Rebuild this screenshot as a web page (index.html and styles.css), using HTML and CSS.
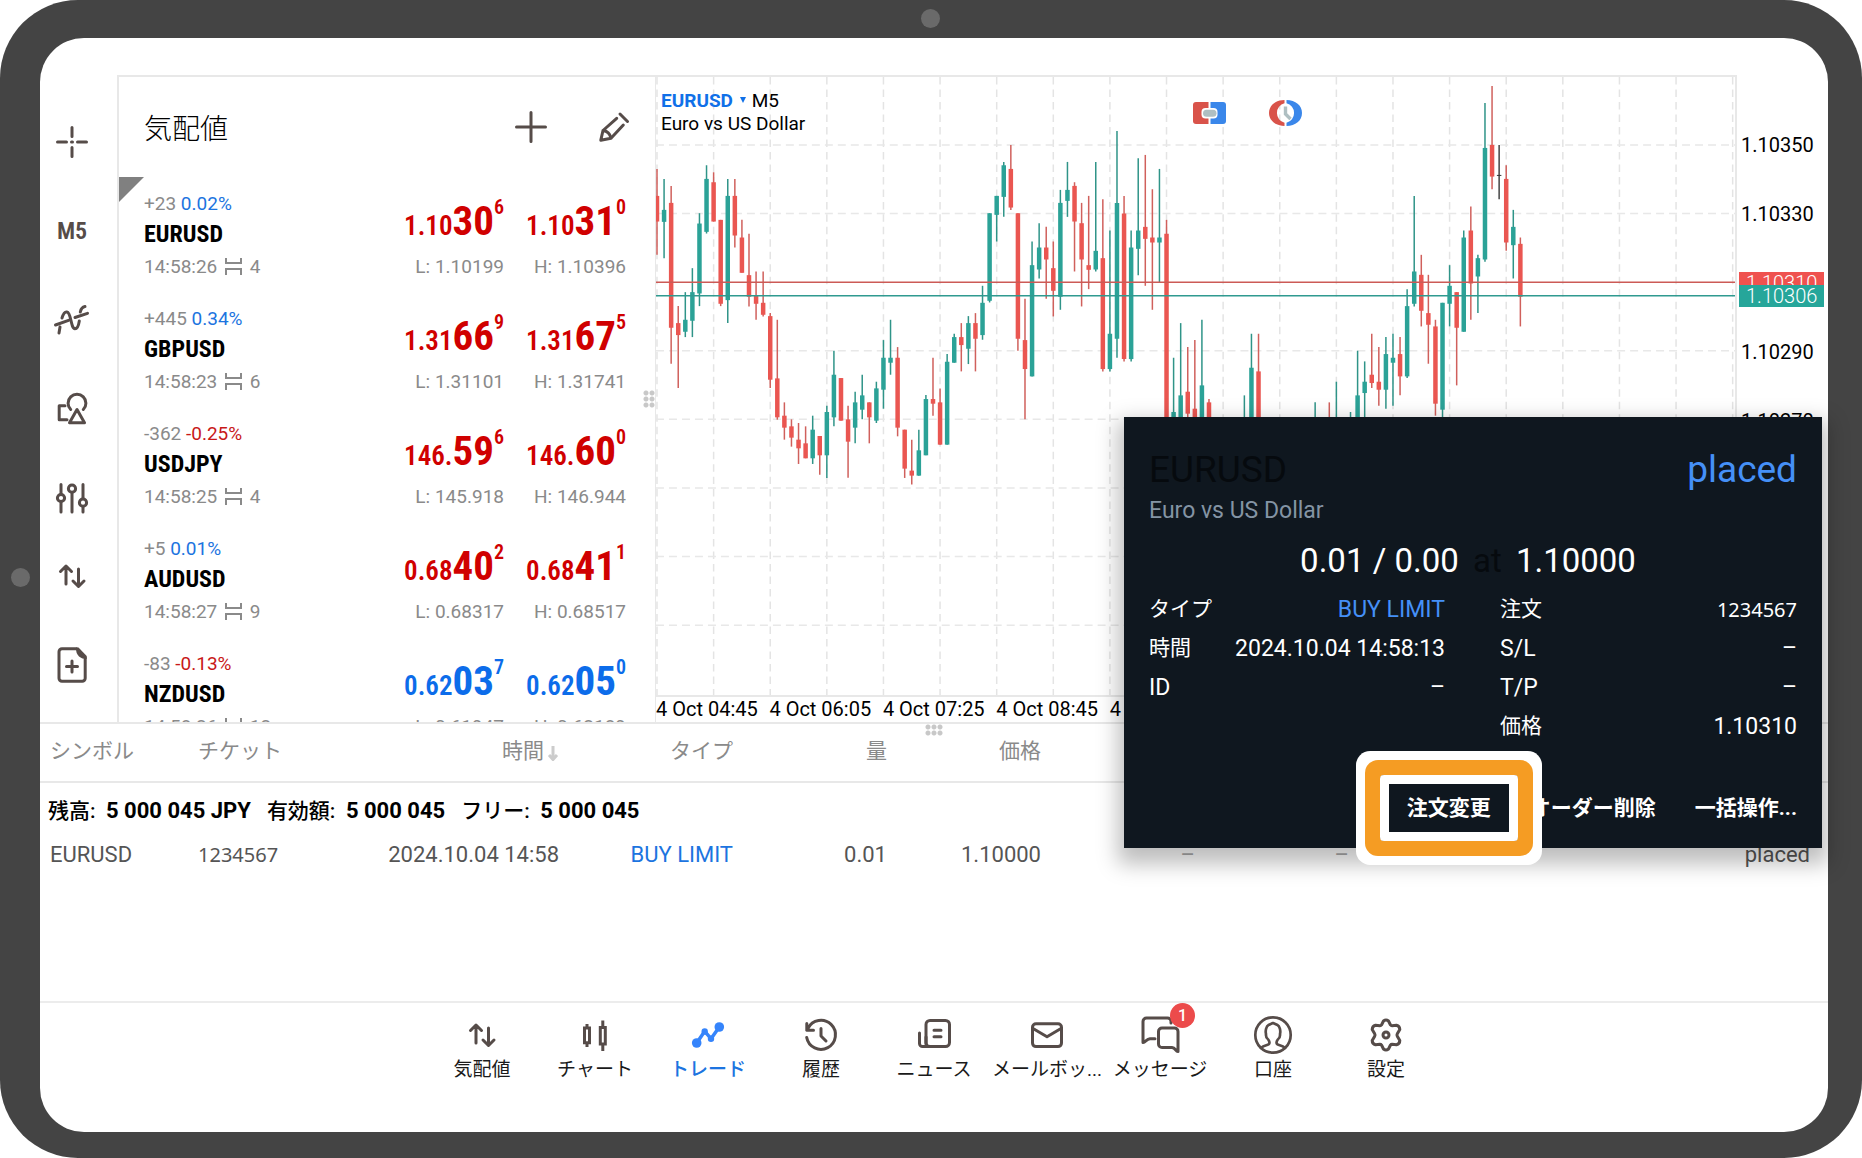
FILE: index.html
```html
<!DOCTYPE html>
<html lang="ja">
<head>
<meta charset="utf-8">
<meta name="viewport" content="width=device-width, initial-scale=1">
<title>トレード</title>
<link rel="stylesheet" href="styles.css">
</head>
<body>
<svg class="sprite" aria-hidden="true">
  <symbol id="i-arrows" viewBox="0 0 40 40"><path d="M14 28V10M8.500 15.500L14 10l5.500 5.500M26.500 13v17M21 25l5.500 5.500L32 25"/></symbol>
  <symbol id="i-spread" viewBox="0 0 17 17"><path d="M1 0v5h15V0M1 17v-6h15v6"/></symbol>
</svg>

<div class="tablet">
  <span class="lens lens--top"></span>
  <span class="lens lens--left"></span>

  <div class="screen">
    <div class="workspace">
      <div class="tools">
        <button class="tool" aria-label="十字カーソル"><svg class="icon" viewBox="0 0 40 40"><path d="M20 5.500v9M20 25.500v9M5.500 20h9M25.500 20h9M19.500 20h1"/></svg></button>
        <button class="tool tool--text">M5</button>
        <button class="tool" aria-label="インディケータ"><svg class="icon" viewBox="0 0 40 40"><path d="M3.500 25L16.500 20.300M23 17.500L35.500 13.300M7 33l1-6M10 18c1.500-5 3.200-6.500 5-6 4.500 1 3.500 16.500 8 16.700 2.500 0 3.600-3 4.300-7.700M28.300 12c.6-3 2.200-5 4.700-5.500"/></svg></button>
        <button class="tool" aria-label="オブジェクト"><svg class="icon" viewBox="0 0 40 40"><path d="M18.700 20.500a8.900 8.900 0 1 1 12.600 0M25 20.500L17.500 33.800h15zM13 16.800H7.200v14H15"/></svg></button>
        <button class="tool" aria-label="設定"><svg class="icon" viewBox="0 0 40 40"><path d="M9 6.500v9.500M9 24v10M20 14.500V34M31 6.500v14M31 28.500V34"/><circle cx="9" cy="20" r="3.600"/><circle cx="20" cy="10.700" r="3.600"/><circle cx="31" cy="24.700" r="3.600"/></svg></button>
        <button class="tool tool--short" aria-label="売買"><svg class="icon"><use href="#i-arrows"/></svg></button>
        <button class="tool tool--tall" aria-label="新規注文"><svg class="icon" viewBox="0 0 40 40"><path d="M24.500 3.800H10a3 3 0 0 0-3 3v26.400a3 3 0 0 0 3 3h20.200a3 3 0 0 0 3-3V12.500M20 16v11M14.500 21.500h11"/><path class="solid" d="M24 2.500h2.500l8.200 8.500v3c-6 0-11-3-10.700-11.500z"/></svg></button>
      </div>

      <section class="watch">
        <header class="watch-head">
          <h1>気配値</h1>
          <button aria-label="追加"><svg class="icon" viewBox="0 0 40 40"><path d="M20 5.500v29M5.500 20h29"/></svg></button>
          <button aria-label="編集"><svg class="icon" viewBox="0 0 40 40"><path d="M6.800 33.200L9 23.500 22.700 11.300M6.800 33.200l10.200-2L29.300 18M9 23.500c4.500.5 7 3 8 7.700M26 7l7.500 7.500"/></svg></button>
        </header>
        <ul class="quotes">
          <li class="quote quote--current">
            <p class="change">+23 <b class="up">0.02%</b></p>
            <p class="symbol">EURUSD</p>
            <p class="price down">1.10<b>30</b><sup>6</sup></p>
            <p class="price down">1.10<b>31</b><sup>0</sup></p>
            <p class="time">14:58:26 <svg><use href="#i-spread"/></svg> 4</p>
            <p class="range">L: 1.10199</p><p class="range">H: 1.10396</p>
          </li>
          <li class="quote">
            <p class="change">+445 <b class="up">0.34%</b></p>
            <p class="symbol">GBPUSD</p>
            <p class="price down">1.31<b>66</b><sup>9</sup></p>
            <p class="price down">1.31<b>67</b><sup>5</sup></p>
            <p class="time">14:58:23 <svg><use href="#i-spread"/></svg> 6</p>
            <p class="range">L: 1.31101</p><p class="range">H: 1.31741</p>
          </li>
          <li class="quote">
            <p class="change">-362 <b class="loss">-0.25%</b></p>
            <p class="symbol">USDJPY</p>
            <p class="price down">146.<b>59</b><sup>6</sup></p>
            <p class="price down">146.<b>60</b><sup>0</sup></p>
            <p class="time">14:58:25 <svg><use href="#i-spread"/></svg> 4</p>
            <p class="range">L: 145.918</p><p class="range">H: 146.944</p>
          </li>
          <li class="quote">
            <p class="change">+5 <b class="up">0.01%</b></p>
            <p class="symbol">AUDUSD</p>
            <p class="price down">0.68<b>40</b><sup>2</sup></p>
            <p class="price down">0.68<b>41</b><sup>1</sup></p>
            <p class="time">14:58:27 <svg><use href="#i-spread"/></svg> 9</p>
            <p class="range">L: 0.68317</p><p class="range">H: 0.68517</p>
          </li>
          <li class="quote">
            <p class="change">-83 <b class="loss">-0.13%</b></p>
            <p class="symbol">NZDUSD</p>
            <p class="price rise">0.62<b>03</b><sup>7</sup></p>
            <p class="price rise">0.62<b>05</b><sup>0</sup></p>
            <p class="time">14:58:26 <svg><use href="#i-spread"/></svg> 12</p>
            <p class="range">L: 0.61947</p><p class="range">H: 0.62189</p>
          </li>
        </ul>
        <span class="grip grip--side"></span>
      </section>

      <section class="chart">
        <div class="plot">
          <svg id="candles" class="candles" viewBox="0 0 1080 619" preserveAspectRatio="none" role="img" aria-label="EURUSD M5"></svg>
          <div class="caption">
            <p><button class="pair">EURUSD <i></i></button>M5</p>
            <p>Euro vs US Dollar</p>
          </div>
          <div class="quick">
            <button aria-label="ワンクリック取引"><svg width="33" height="26" viewBox="0 0 33 26"><path fill="#d9534a" d="M3 2h12.500v22H3a3 3 0 0 1-3-3V5a3 3 0 0 1 3-3z"/><path fill="#3a87ea" d="M17.500 2H30a3 3 0 0 1 3 3v16a3 3 0 0 1-3 3H17.500z"/><rect x="8.500" y="8" width="16" height="10.500" rx="4" fill="#fff"/><rect x="10" y="9.700" width="13.500" height="7" rx="3.500" fill="#afbfc2"/></svg></button>
            <button aria-label="注文時間"><svg width="33" height="26" viewBox="0 0 33 26"><path fill="#d9534a" d="M15.500 0v3.300a10 10 0 0 0 0 19.400V26C6.500 26 0 20.500 0 13S6.500 0 15.500 0z"/><path fill="#3a87ea" d="M17.500 0v3.300a10 10 0 0 1 0 19.400V26C26.500 26 33 20.500 33 13S26.500 0 17.500 0z"/><path d="M16.500 6.500v7.500l5 5" fill="none" stroke="#afbfc2" stroke-width="3.400"/></svg></button>
          </div>
        </div>
        <div class="prices">
          <span>1.10350</span>
          <span>1.10330</span>
          <span class="tags"><b class="tag tag--ask">1.10310</b><b class="tag tag--bid">1.10306</b></span>
          <span>1.10290</span>
          <span>1.10270</span>
        </div>
        <div class="times">
          <span>4 Oct 04:45</span><span>4 Oct 06:05</span><span>4 Oct 07:25</span><span>4 Oct 08:45</span><span>4 Oct 10:05</span>
        </div>
      </section>
    </div>

    <section class="trades">
      <span class="grip grip--top"></span>
      <table>
        <colgroup><col class="c-wide"><col class="c-wide"><col class="c-time"><col class="c-type"><col class="c-num"><col class="c-num"><col class="c-num"><col class="c-num"><col class="c-num"><col></colgroup>
        <thead>
          <tr><th>シンボル</th><th>チケット</th><th class="end sorted">時間<svg width="12" height="16" viewBox="0 0 12 16"><path d="M6 1v13M2 10l4 4.500 4-4.500"/></svg></th><th class="end">タイプ</th><th class="end">量</th><th class="end">価格</th><td colspan="4"></td></tr>
        </thead>
        <tbody>
          <tr class="balance"><td colspan="10"><span>残高:</span> <b>5 000 045 JPY</b><span>有効額:</span> <b>5 000 045</b><span>フリー:</span> <b>5 000 045</b></td></tr>
          <tr class="order"><td>EURUSD</td><td class="ticket">1234567</td><td class="end">2024.10.04 14:58</td><td class="end buy">BUY LIMIT</td><td class="end">0.01</td><td class="end">1.10000</td><td class="end none">–</td><td class="end none">–</td><td></td><td class="end">placed</td></tr>
        </tbody>
      </table>
    </section>

    <nav class="tabs">
      <a href="#quotes"><svg class="icon"><use href="#i-arrows"/></svg>気配値</a>
      <a href="#chart"><svg class="icon" viewBox="0 0 40 40"><path d="M9.500 13h5v14.800h-5zM12 9v3M12 29v3M25.300 12.500h5V29h-5zM27.800 5.500V11M27.800 30v6" stroke-linejoin="miter" stroke-linecap="butt"/></svg>チャート</a>
      <a href="#trade" class="active" aria-current="page"><svg class="icon" viewBox="0 0 40 40"><path stroke-width="3.500" d="M8.700 28l8-11.700 6.300 7.400L31.300 12"/><g class="solid"><circle cx="8.700" cy="28" r="4.800"/><circle cx="16.700" cy="16.500" r="3.200"/><circle cx="23" cy="23.700" r="3.200"/><circle cx="31.300" cy="12" r="4.800"/></g></svg>トレード</a>
      <a href="#history"><svg class="icon" viewBox="0 0 40 40"><path d="M5.700 22.500a14.500 14.500 0 1 0 1.300-9.200L5.800 15.200M5.800 8.500v6.700h6.700M20 13.500V21l5 5"/></svg>履歴</a>
      <a href="#news"><svg class="icon" viewBox="0 0 40 40"><rect x="12" y="5.500" width="23.500" height="26" rx="4"/><path d="M5.500 18v10.500a3 3 0 0 0 3 3h6M12 22v7M20 15.300h7M20 21.700h7"/></svg>ニュース</a>
      <a href="#mail"><svg class="icon" viewBox="0 0 40 40"><rect x="5.500" y="8.800" width="29" height="22.800" rx="3.500"/><path d="M6 13.500l14 8.300 14-8.300"/></svg>メールボッ...</a>
      <a href="#messages"><span class="badged"><svg class="icon" viewBox="0 0 40 40"><path d="M31 8V6.500A3.500 3.500 0 0 0 27.500 3H6.500A3.500 3.500 0 0 0 3 6.500v21c2.500-.3 3.500-3.500 7-3.800h5"/><path d="M22 13h12.500a3.500 3.500 0 0 1 3.500 3.500v20c-2.500-.2-2.500-3.700-6-4H22a3.500 3.500 0 0 1-3.500-3.500V16.500A3.500 3.500 0 0 1 22 13z"/></svg><b class="badge">1</b></span>メッセージ</a>
      <a href="#accounts"><svg class="icon" viewBox="0 0 40 40"><circle cx="20" cy="20" r="17.700" stroke-width="2.700"/><path stroke-width="2.700" d="M8 33c3-3 6.500-2.500 8-4 1-1.500.3-3-.8-4.500-1.500-1-2.500-3-2.200-5.500-.8-3 .2-8 2.500-9l4.500-2 4.500 2c2.300 1 3.300 6 2.500 9 .3 2.500-.7 4.500-2.200 5.500-1.100 1.500-1.800 3-.8 4.500 1.500 1.500 5 1 8 4"/></svg>口座</a>
      <a href="#settings"><svg class="icon" viewBox="0 0 40 40"><path d="M17.500 6q2.500-2 5 0l2 4q.5.700 1.500.7l4.500-.5q3.300.8 3.300 4.300l-2.500 4.300q-.7 1.200 0 2.400l2.500 4.300q0 3.500-3.300 4.300l-4.500-.5q-1 0-1.500.7l-2 4q-2.500 2-5 0l-2-4q-.5-.7-1.500-.7l-4.500.5q-3.300-.8-3.300-4.300l2.500-4.300q.7-1.200 0-2.400l-2.500-4.300q0-3.500 3.300-4.300l4.500.5q1 0 1.500-.7z"/><circle cx="20" cy="20" r="3"/></svg>設定</a>
    </nav>

    <aside class="popup">
      <header>
        <h2>EURUSD</h2><strong>placed</strong>
      </header>
      <p class="desc">Euro vs US Dollar</p>
      <p class="deal">0.01 / 0.00 <em>at</em> 1.10000</p>
      <div class="facts">
        <dl>
          <div><dt class="jp">タイプ</dt><dd class="buy">BUY LIMIT</dd></div>
          <div><dt class="jp">時間</dt><dd>2024.10.04 14:58:13</dd></div>
          <div><dt>ID</dt><dd>–</dd></div>
        </dl>
        <dl>
          <div><dt class="jp">注文</dt><dd class="ticket">1234567</dd></div>
          <div><dt>S/L</dt><dd>–</dd></div>
          <div><dt>T/P</dt><dd>–</dd></div>
          <div><dt class="jp">価格</dt><dd>1.10310</dd></div>
        </dl>
      </div>
      <div class="actions">
        <button class="marked">注文変更</button>
        <button>オーダー削除</button>
        <button>一括操作...</button>
      </div>
    </aside>
  </div>
</div>
<script src="chart.js"></script>
</body>
</html>
```
FILE: styles.css
```css
* { box-sizing: border-box; }

body, h1, h2, p, ul, dl, dd { margin: 0; }

body {
  background: #fff;
  color: #000;
  font-family: Roboto, "Noto Sans CJK JP", sans-serif;
  font-size: 22px;
}

button {
  padding: 0;
  border: 0;
  background: none;
  color: inherit;
  font: inherit;
}

ul { padding: 0; list-style: none; }

.sprite { position: absolute; width: 0; height: 0; }

.icon {
  display: block;
  width: 40px;
  height: 40px;
  fill: none;
  stroke: currentColor;
  stroke-width: 3;
  stroke-linecap: round;
  stroke-linejoin: round;
}

.solid { fill: currentColor; stroke: none; }

/* Device frame */
.tablet {
  position: relative;
  display: flex;
  min-height: 100vh;
  padding: 38px 34px 26px 40px;
  border-radius: 78px;
  background: #444;
}

.lens {
  position: absolute;
  width: 19px;
  height: 19px;
  border-radius: 50%;
  background: #6a6a6a;
}

.lens--top { top: 9px; left: calc(50% - 10px); }
.lens--left { left: 11px; top: calc(50% - 11px); }

.screen {
  position: relative;
  display: flex;
  flex: 1;
  flex-direction: column;
  min-width: 0;
  padding-top: 37px;
  border-radius: 44px;
  background: #fff;
}

.workspace {
  display: flex;
  height: 649px;
  border-bottom: 2px solid #e8e8e8;
}

/* Chart tools */
.tools {
  display: flex;
  flex-direction: column;
  width: 77px;
  padding: 22px 13px 0 0;
  color: #564c49;
}

.tool {
  display: flex;
  flex: none;
  align-items: center;
  justify-content: center;
  height: 89px;
}

.tool--short { height: 67px; }
.tool--tall { height: 111px; }

.tool--text, .symbol, .price {
  font-family: "Roboto Condensed", "Open Sans Condensed", "Noto Sans Condensed", Roboto, sans-serif;
  font-weight: 700;
}

.tool--text { font-size: 24px; font-weight: 600; }

/* Market watch */
.watch {
  position: relative;
  display: flex;
  flex-direction: column;
  width: 539px;
  border: 2px solid #e8e8e8;
  border-width: 2px 1px 0 2px;
}

.watch-head {
  display: flex;
  flex: none;
  align-items: center;
  gap: 43px;
  height: 100px;
  padding: 0 21px 1px 25px;
  color: #564c49;
}

.watch-head h1 {
  flex: 1;
  color: #000;
  font-size: 28px;
  font-weight: 300;
}

.quotes { flex: 1; overflow: hidden; }

.quote {
  position: relative;
  display: grid;
  grid-template-columns: 1fr 104px 122px;
  grid-template-rows: 26px 34px 32px;
  height: 115px;
  padding: 14px 29px 0 25px;
  color: #8a8a8a;
  font-size: 19px;
}

.quote--current::before {
  content: "";
  position: absolute;
  width: 25px;
  height: 25px;
  background: #808080;
  clip-path: polygon(0 0, 100% 0, 0 100%);
}

.change { grid-area: 1 / 1; line-height: 26px; }
.change b { font-weight: 400; }
.up { color: #1c74e0; }
.loss { color: #c81818; }

.symbol {
  grid-area: 2 / 1;
  color: #000;
  font-size: 24px;
  line-height: 34px;
}

.price {
  grid-row: 1 / 3;
  align-self: end;
  padding-bottom: 4px;
  font-size: 27px;
  font-weight: 600;
  line-height: 42px;
  text-align: right;
  white-space: nowrap;
}

.price b { font-size: 41px; font-weight: 700; }

.price sup {
  font-size: 20px;
  line-height: 0;
  vertical-align: 21px;
}

.down { color: #d00000; }
.rise { color: #0c6cea; }

.time { line-height: 32px; }

.time svg {
  width: 17px;
  height: 17px;
  margin: 0 3px;
  fill: none;
  stroke: currentColor;
  stroke-width: 2;
  vertical-align: -2px;
}

.range { line-height: 32px; text-align: right; white-space: nowrap; }

.grip {
  position: absolute;
  background: radial-gradient(circle, #c8c8c8 2px, transparent 3px) 0 0 / 6px 6px;
}

.grip--side { right: 0; top: 313px; width: 12px; height: 18px; }
.grip--top { left: calc(50% - 9px); top: 0; width: 18px; height: 12px; }

/* Chart */
.chart {
  display: grid;
  flex: 1;
  grid-template-columns: 1fr 91px;
  grid-template-rows: 1fr 29px;
  min-width: 0;
  font-size: 20px;
}

.plot {
  position: relative;
  min-width: 0;
  border: 2px solid #e8e8e8;
  border-left: 0;
}

.candles { display: block; width: 100%; height: 100%; }

.caption {
  position: absolute;
  top: 12px;
  left: 5px;
  font-size: 19px;
  line-height: 23px;
}

.pair { color: #1070e8; font-weight: 700; }

.pair i {
  display: inline-block;
  margin: 0 6px 4px 2px;
  border: 3px solid transparent;
  border-top: 6px solid #1070e8;
  border-bottom: 0;
}

.quick {
  position: absolute;
  top: 23px;
  left: 537px;
  display: flex;
  gap: 43px;
}

.quick svg { display: block; }

.prices {
  display: grid;
  align-content: start;
  grid-auto-rows: 69px;
  align-items: center;
  padding: 35px 0 0 4px;
}

.tags { position: relative; height: 24px; color: #fff; }

.tag {
  position: absolute;
  left: -2px;
  width: 85px;
  height: 22px;
  padding-left: 7px;
  background: #ef524f;
  font-weight: 300;
  line-height: 22px;
}

.tag--ask { top: 1px; }
.tag--bid { top: 14px; background: #26a69a; }

.times {
  display: grid;
  grid-template-columns: repeat(9, 1fr);
  padding-right: 60px;
  line-height: 24px;
  white-space: nowrap;
}

/* Trades */
.trades { position: relative; flex: 1; }

.trades table {
  width: 100%;
  border-collapse: collapse;
  table-layout: fixed;
  color: #555;
}

.c-wide { width: 158px; }
.c-time { width: 203px; }
.c-type { width: 174px; }
.c-num { width: 154px; }

.trades th, .trades td { padding: 0; text-align: left; white-space: nowrap; }
.trades tr > :first-child { padding-left: 10px; }
.trades .end { text-align: right; }

.trades thead tr { height: 58px; border-bottom: 2px solid #e8e8e8; }

.trades thead th {
  padding-bottom: 8px;
  color: #8a8a8a;
  font-size: 21px;
  font-weight: 400;
}

.sorted svg {
  margin-left: 3px;
  fill: none;
  stroke: #ccc;
  stroke-width: 3;
  vertical-align: -3px;
}

.balance { height: 52px; color: #000; }
.balance span { font-size: 21px; font-weight: 500; }
.trades .balance td { padding-left: 8px; }
.balance b { margin: 0 16px 0 5px; }

.order { height: 40px; }
.trades .order td:last-child { padding-right: 18px; }
.trades .none { color: #aaa; }

.order .ticket, .popup .ticket { font-family: "Noto Sans", sans-serif; font-size: 20px; }
.trades .buy { color: #1c74e0; }

/* Bottom tabs */
.tabs {
  display: flex;
  justify-content: center;
  height: 131px;
  padding-top: 12px;
  border-top: 2px solid #ececec;
}

.tabs a {
  display: flex;
  flex-direction: column;
  align-items: center;
  width: 113px;
  color: #1a1a1a;
  font-size: 19px;
  line-height: 30px;
  text-decoration: none;
  white-space: nowrap;
}

.tabs .icon { color: #564c49; }
.tabs .active { color: #1c74e0; font-weight: 500; }
.tabs .active .icon { color: #3584fb; }

.badged { position: relative; }

.badge {
  position: absolute;
  top: -12px;
  right: -15px;
  width: 25px;
  height: 25px;
  border-radius: 50%;
  background: #ec4b4b;
  color: #fff;
  font-size: 16px;
  font-weight: 500;
  line-height: 25px;
  text-align: center;
}

/* Order details */
.popup {
  position: absolute;
  top: 379px;
  right: 6px;
  width: 698px;
  height: 431px;
  padding: 30px 25px 0;
  background: #0f171f;
  box-shadow: 0 10px 20px 6px rgba(0, 0, 0, .26);
  color: #fff;
  font-size: 23px;
}

.popup header { display: flex; justify-content: space-between; }

.popup h2, .popup strong {
  font-size: 37px;
  font-weight: 400;
  line-height: 46px;
}

.popup h2, .popup em { color: #060a0e; }
.popup strong, .popup .buy { color: #4590f7; }

.desc { color: #8494a4; line-height: 36px; }

.deal {
  margin-top: 10px;
  padding-right: 10px;
  font-size: 33px;
  line-height: 44px;
  text-align: center;
}

.deal em { margin: 0 6px; font-style: normal; }

.facts {
  display: grid;
  grid-template-columns: 296px 1fr;
  gap: 55px;
  margin-top: 7px;
}

.facts dl > div {
  display: flex;
  justify-content: space-between;
  height: 39px;
  line-height: 39px;
}

.popup .jp { font-size: 21px; }

.actions {
  display: flex;
  justify-content: flex-end;
  gap: 39px;
  margin-top: 39px;
  font-size: 21px;
  font-weight: 700;
  line-height: 46px;
}

.marked { position: relative; }

/* Callout ring round the button: white, orange, white */
.marked::after {
  content: "";
  position: absolute;
  inset: -10px -27px;
  border: 9px solid #fff;
  border-radius: 4px;
  box-shadow: 0 0 0 15px #f59c23, 0 0 0 24px #fff;
}
```
FILE: chart.js
```js
// M5 candles: [slot, direction, high, body top, body bottom, low], in thirds of a pixel
const candles = [
  [0,'r',327,408,485,585],[1,'g',357,450,486,595],[2,'r',378,429,804,912],[3,'r',739,790,826,985],
  [4,'g',697,780,816,832],[5,'g',625,697,783,832],[6,'g',460,491,701,739],[7,'g',316,357,516,521],
  [8,'r',337,367,485,485],[9,'r',480,480,732,739],[10,'g',357,408,721,790],[11,'r',357,408,527,563],
  [12,'r',480,533,639,639],[13,'r',522,646,711,740],[14,'r',635,707,732,780],[15,'r',635,729,765,770],
  [16,'r',760,769,960,985],[17,'r',780,956,1073,1080],[18,'r',1028,1068,1104,1140],[19,'r',1079,1100,1134,1161],
  [20,'r',1090,1140,1166,1213],[21,'r',1100,1151,1196,1196],[22,'g',1068,1110,1196,1213],[23,'r',1129,1129,1187,1245],
  [24,'g',1038,1057,1187,1255],[25,'g',873,945,1073,1100],[26,'r',955,955,1083,1083],[27,'r',1038,1079,1146,1254],
  [28,'g',996,1028,1104,1151],[29,'g',945,1007,1050,1079],[30,'r',1028,1028,1073,1151],[31,'g',966,986,1083,1090],
  [32,'g',841,894,990,1047],[33,'g',780,894,909,945],[34,'r',862,894,1104,1130],[35,'r',1110,1110,1227,1255],
  [36,'r',1140,1233,1248,1275],[37,'g',1110,1172,1248,1248],[38,'g',1006,1018,1187,1187],[39,'r',894,1018,1032,1068],
  [40,'r',986,1028,1155,1155],[41,'g',883,906,1155,1155],[42,'g',822,832,909,909],[43,'r',790,832,856,935],
  [44,'g',769,790,867,913],[45,'r',760,790,837,935],[46,'g',678,729,826,840],[47,'g',460,460,723,728],
  [48,'g',408,408,465,545],[49,'g',306,316,411,471],[50,'r',255,327,443,450],[51,'r',460,460,837,873],
  [52,'r',717,841,928,1079],[53,'g',545,616,950,950],[54,'g',490,563,629,656],[55,'r',501,563,599,717],
  [56,'r',545,625,693,770],[57,'g',390,429,711,750],[58,'g',306,390,423,471],[59,'r',367,378,485,635],
  [60,'r',429,490,599,740],[61,'r',408,616,630,688],[62,'g',306,573,629,635],[63,'r',418,595,928,935],
  [64,'g',512,822,928,935],[65,'g',213,429,837,894],[66,'r',408,461,898,905],[67,'g',512,563,898,905],
  [68,'g',295,512,567,646],[69,'r',285,501,537,678],[70,'r',388,533,548,750],[71,'g',327,533,548,667],
  [72,'r',480,522,1150,1200],[73,'g',894,1057,1150,1200],[74,'g',790,1007,1150,1200],[75,'r',862,996,1062,1200],
  [76,'r',841,1047,1150,1200],[77,'g',780,977,1150,1200],[78,'r',1018,1028,1150,1200],[83,'g',1007,1100,1150,1200],
  [84,'g',822,924,1150,1200],[85,'r',822,935,1150,1200],[93,'g',1028,1100,1150,1200],[95,'r',1028,1100,1150,1200],
  [96,'g',966,1100,1150,1200],[98,'g',1057,1100,1150,1200],[99,'g',873,1007,1150,1200],[100,'g',905,966,1000,1100],
  [101,'r',822,945,970,985],[102,'r',862,966,990,1038],[103,'g',832,883,990,1047],[104,'g',822,894,909,1038],
  [105,'r',832,883,950,1007],[106,'g',688,739,950,955],[107,'g',408,635,732,740],[108,'r',585,645,753,800],
  [109,'r',645,760,795,912],[110,'r',780,800,1032,1068],[111,'g',729,729,1050,1080],[112,'g',616,678,732,800],
  [113,'r',697,697,804,977],[114,'g',512,533,816,816],[115,'r',440,512,671,780],[116,'g',585,595,650,760],
  [117,'g',129,264,599,606],[118,'r',78,255,350,388],[119,'k',255,345,348,418],[120,'r',316,357,548,573],
  [121,'g',450,501,556,656],[122,'r',533,552,711,800]
];

const colors = { r: '#ea5651', g: '#2ba297', k: '#333' };
const wicks = { r: '#d0605c', g: '#2f9488', k: '#444' };
const slot = 85 / 12;
const y = v => v / 3 - 17;

let out = '';
for (let x = 1; x < 1080; x += slot * 8) {
  out += `<path d="M${x} 0V619" stroke="#e4e4e4" stroke-width="1.5" stroke-dasharray="7.500 5"/>`;
}
for (const v of [255, 461, 873, 1079, 1285, 1491, 1697]) {
  out += `<path d="M0 ${y(v)}H1080" stroke="#e8e8e8" stroke-width="1.5" stroke-dasharray="8 5"/>`;
}
for (const [n, c, high, top, bottom, low] of candles) {
  const x = n * slot + 1;
  out += `<path d="M${x} ${y(high)}V${y(low)}" stroke="${wicks[c]}" stroke-width="1.5"/>`;
  out += `<path d="M${x} ${y(top)}V${y(bottom)}" stroke="${colors[c]}" stroke-width="4.500"/>`;
}
out += `<path d="M0 ${y(667)}H1080" stroke="#cc5a56" stroke-width="1.500"/>`;
out += `<path d="M0 ${y(707.5)}H1080" stroke="#2f9a90" stroke-width="1.500"/>`;
document.getElementById('candles').innerHTML = out;
```
